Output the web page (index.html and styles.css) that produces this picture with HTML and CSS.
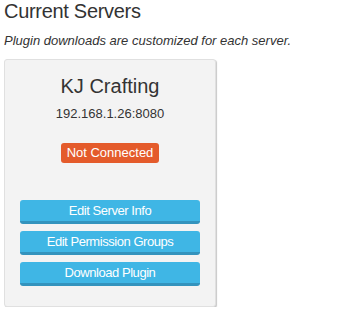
FILE: index.html
```html
<!DOCTYPE html>
<html>
<head>
<meta charset="utf-8">
<link rel="stylesheet" href="styles.css">
</head>
<body>
<div class="page">
  <h2 class="title">Current Servers</h2>
  <p class="note">Plugin downloads are customized for each server.</p>
  <div class="card">
    <div class="name">KJ Crafting</div>
    <div class="addr">192.168.1.26:8080</div>
    <div class="badge-row"><span class="badge">Not Connected</span></div>
    <div class="actions">
      <button class="btn">Edit Server Info</button>
      <button class="btn">Edit Permission Groups</button>
      <button class="btn">Download Plugin</button>
    </div>
  </div>
</div>
</body>
</html>
```
FILE: styles.css
```css
html, body {
  margin: 0;
  padding: 0;
  background: #fff;
}
body {
  font-family: "Liberation Sans", Arial, sans-serif;
  color: #333;
}
.page {
  padding: 0 4px;
}
.title {
  font-size: 20px;
  font-weight: normal;
  line-height: 20px;
  letter-spacing: -0.3px;
  margin: 1px 0 0 0;
  color: #333;
}
.note {
  font-size: 13px;
  font-style: italic;
  line-height: 18px;
  margin: 11px 0 0 0;
}
.card {
  box-sizing: border-box;
  width: 212px;
  margin-top: 9px;
  background: #f3f3f3;
  border: 1px solid #e0e0e0;
  border-radius: 3px;
  box-shadow: 1px 1px 1px rgba(0,0,0,0.22);
  padding: 14px 15px 20px;
  text-align: center;
}
.name {
  font-size: 20px;
  line-height: 24px;
  color: #333;
}
.addr {
  font-size: 13px;
  line-height: 18px;
  margin-top: 7px;
}
.badge-row {
  margin-top: 20px;
  height: 20px;
}
.badge {
  display: inline-block;
  background: #e45b2b;
  color: #fff;
  font-size: 13px;
  line-height: 20px;
  padding: 0 6px;
  border-radius: 3px;
}
.actions {
  margin-top: 37px;
  display: flex;
  flex-direction: column;
  gap: 7px;
}
.btn {
  display: block;
  width: 180px;
  height: 24px;
  margin: 0;
  padding: 0;
  border: 0;
  border-bottom: 3px solid #3393bd;
  border-radius: 3px;
  background: #3fb6e5;
  color: #fff;
  font-family: "Liberation Sans", Arial, sans-serif;
  font-size: 13px;
  letter-spacing: -0.45px;
  line-height: 21px;
  text-align: center;
}
```
